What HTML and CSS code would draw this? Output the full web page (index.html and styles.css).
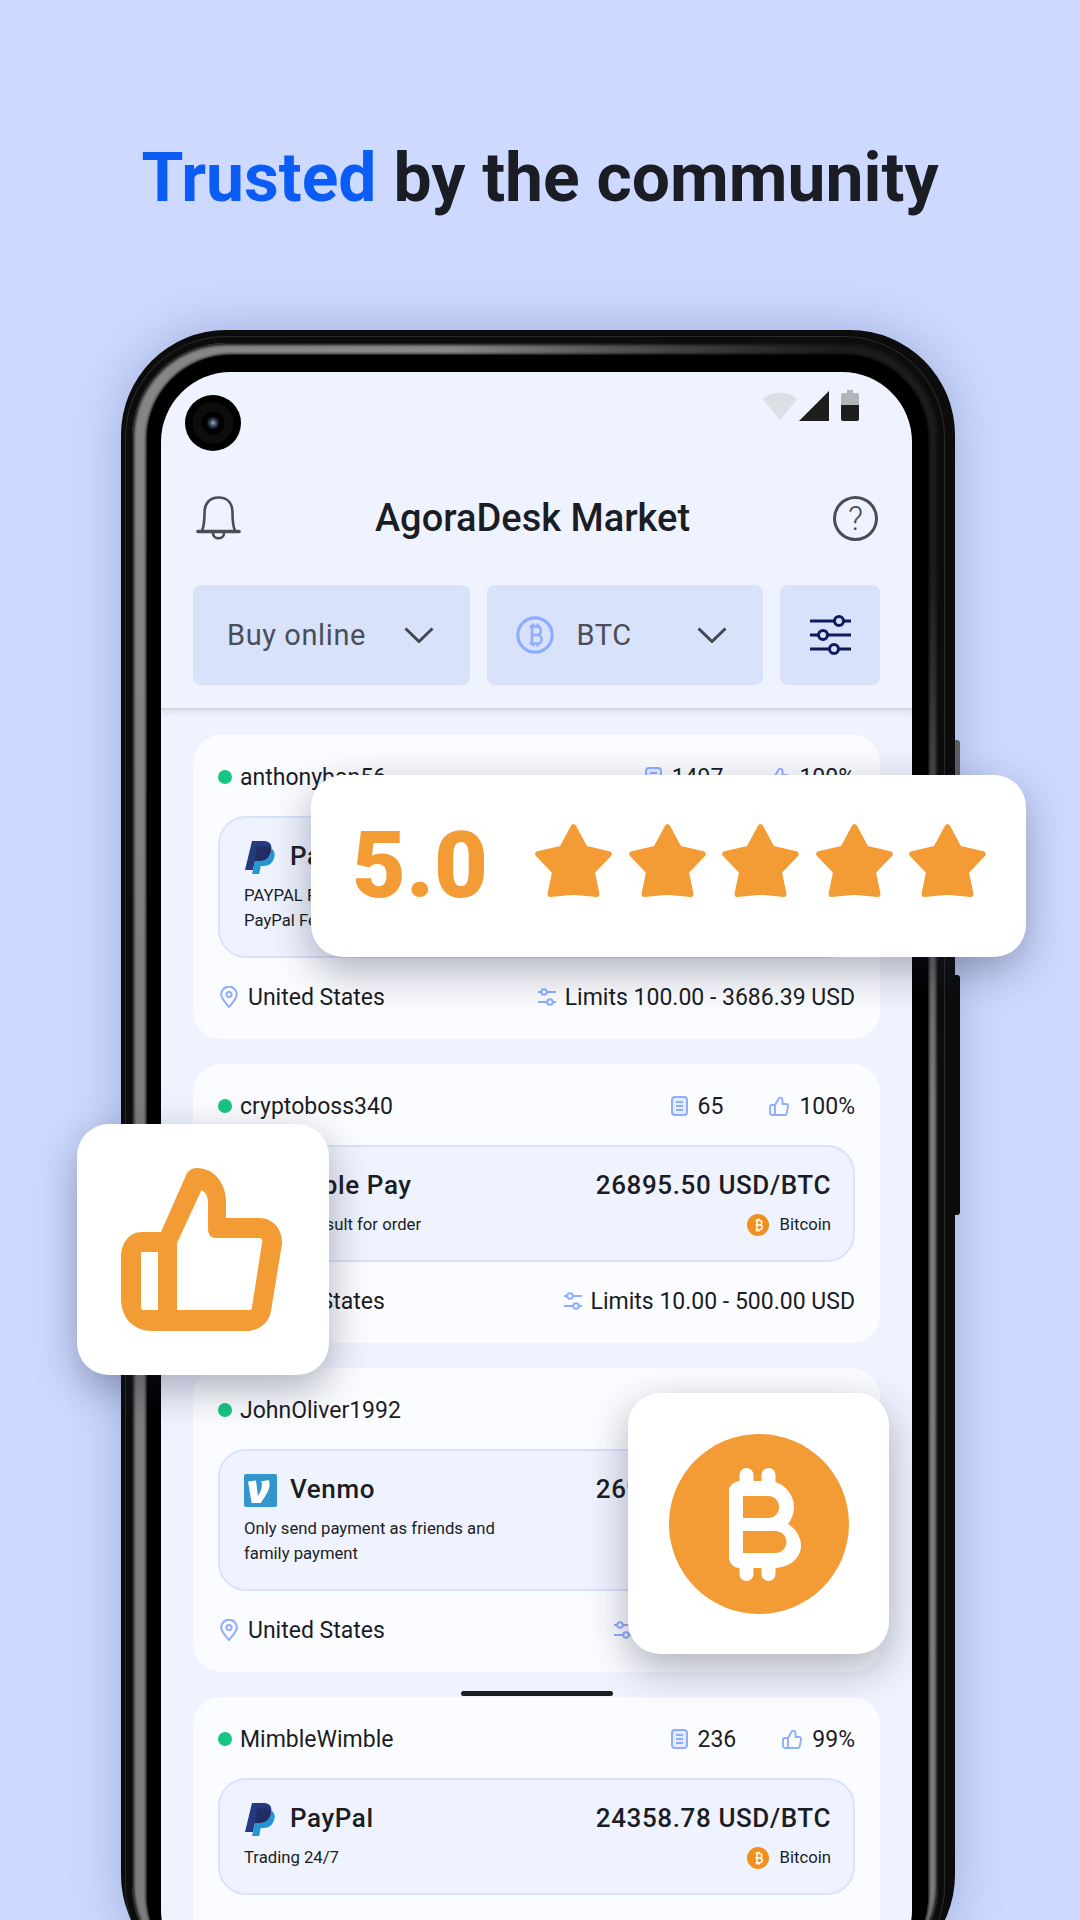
FILE: index.html
```html
<!DOCTYPE html>
<html lang="en">
<head>
    <meta charset="UTF-8">
    <title>AgoraDesk Market</title>
    <link rel="stylesheet" href="styles.css">
</head>
<body>
    <svg class="sprite" width="0" height="0">
        <symbol id="i-doc" viewBox="0 0 17 20">
            <rect x="1" y="1" width="15" height="18" rx="3" fill="#e6ecff" stroke="#8fadff" stroke-width="2"/>
            <path d="M5 6h7M5 10h7M5 14h7" stroke="#8fadff" stroke-width="1.8"/>
        </symbol>
        <symbol id="i-thumb" viewBox="0 0 20 20">
            <path d="M6 9 10 2c2-1 3.500 0 3.500 2.500V8H17c1.500 0 2.200 1 2 2.200l-1.200 7C17.600 18.400 17 19 16 19H3c-1.200 0-2-.8-2-2v-6c0-1.200.8-2 2-2h3v10" fill="none" stroke="#8fadff" stroke-width="1.900" stroke-linejoin="round"/>
        </symbol>
        <symbol id="i-pin" viewBox="0 0 18 22">
            <path d="M9 21C5 16 1.200 12.500 1.200 8.500a7.800 7.800 0 0 1 15.600 0C16.800 12.500 13 16 9 21Z" fill="none" stroke="#8fadff" stroke-width="2"/>
            <circle cx="9" cy="8.500" r="2.600" fill="none" stroke="#8fadff" stroke-width="2"/>
        </symbol>
        <symbol id="i-limits" viewBox="0 0 18 18">
            <path d="M0 4h3M9 4h9M0 14h9M15 14h3" stroke="#8fadff" stroke-width="2"/>
            <circle cx="6" cy="4" r="2.800" fill="none" stroke="#8fadff" stroke-width="2"/>
            <circle cx="12" cy="14" r="2.800" fill="none" stroke="#8fadff" stroke-width="2"/>
        </symbol>
        <symbol id="i-chevron" viewBox="0 0 30 16">
            <path d="M1.500 1.500 15 14.500 28.500 1.500" fill="none" stroke="#43474f" stroke-width="3"/>
        </symbol>
        <symbol id="i-coin" viewBox="0 0 22 22">
            <circle cx="11" cy="11" r="11" fill="#f0901e"/>
            <path d="M8.500 6.500h4c3 0 3 4.200.3 4.400 3.300.2 3.200 4.800-.3 4.800h-4M10 6.500v9.200M10.300 4.700v1.800M12.300 4.700v1.800M10.300 15.700v1.800M12.300 15.700v1.800M8.500 11h4.300" fill="none" stroke="#fff" stroke-width="1.500"/>
        </symbol>
        <symbol id="i-paypal" viewBox="0 0 31 33">
            <path d="M8 0h11c7 0 9.500 4 8 10-1.500 7-6 10-12 10h-4l-2 9H1Z" fill="#253b80"/>
            <path d="M26.500 7c4 2 5 5.500 3.600 10-1.500 5-5.300 8-10.600 8h-2.800l-1.500 8H8l3-13h4c6 0 10.500-3 12-10Z" fill="#2596d1"/>
            <path d="M11 20h4c6 0 10.500-3 12-10l-.5-3c-2-1-4-1.500-7-1.500H13Z" fill="#222d65"/>
        </symbol>
        <symbol id="i-venmo" viewBox="0 0 33 33">
            <rect width="33" height="33" rx="2" fill="#3396cd"/>
            <path d="M24.500 6c.8 1.400 1.100 2.800 1.100 4.600 0 5.700-4.900 13.100-8.900 18.400H7.600L4 7.400l8-.8 1.900 15.400c1.800-2.900 4-7.500 4-10.600 0-1.700-.3-2.900-.8-3.800Z" fill="#fff"/>
        </symbol>
        <symbol id="i-star" viewBox="0 0 100 96">
            <polygon points="50,4 65,32 96,39 74,62 80,91 50,88 20,91 26,62 4,39 35,32" fill="#f39c35" stroke="#f39c35" stroke-width="7.500" stroke-linejoin="round"/>
        </symbol>
    </svg>

    <div class="stage">
        <h1 class="headline"><span class="headline-blue">Trusted</span> by the community</h1>

        <div class="phone">
            <div class="phone-band">
                <div class="phone-bezel">
                    <div class="screen">
                        <div class="topbar">
                            <div class="status">
                                <div class="camera"></div>
                                <div class="status-icons">
                                    <svg width="34" height="30" viewBox="0 0 34 30"><path d="M0 9.500a24 24 0 0 1 34 0L17 30Z" fill="#dcdfe6"/></svg>
                                    <svg class="signal" width="30" height="30" viewBox="0 0 30 30"><path d="M0 30 30 0v30Z" fill="#1e1e1e"/></svg>
                                    <svg class="battery" width="18" height="31" viewBox="0 0 18 31"><path d="M6 0h6v3h4a2 2 0 0 1 2 2v10H0V5a2 2 0 0 1 2-2h4Z" fill="#b1b4b9"/><path d="M0 15h18v14a2 2 0 0 1-2 2H2a2 2 0 0 1-2-2Z" fill="#1e1e1e"/></svg>
                                </div>
                            </div>

                            <div class="appbar">
                                <svg class="bell" width="45" height="44" viewBox="0 0 45 44">
                                    <path d="M6 35C8 30 8.500 26 8.500 17C8.500 7 14 1.500 22.500 1.500S36.500 7 36.500 17C36.500 26 37 30 39 35" fill="none" stroke="#494d56" stroke-width="2.600"/>
                                    <path d="M2 35.500h41" stroke="#494d56" stroke-width="3.600" stroke-linecap="round"/>
                                    <path d="M17 37c0 7 11 7 11 0" fill="none" stroke="#494d56" stroke-width="2.600"/>
                                </svg>
                                <div class="appbar-title">AgoraDesk Market</div>
                                <div class="help">?</div>
                            </div>

                            <div class="filters">
                                <div class="filter">
                                    <span class="filter-label">Buy online</span>
                                    <svg class="chevron"><use href="#i-chevron"/></svg>
                                </div>
                                <div class="filter filter-coin">
                                    <svg width="38" height="38" viewBox="0 0 38 38">
                                        <circle cx="19" cy="19" r="17.200" fill="none" stroke="#8fadff" stroke-width="3.200"/>
                                        <path d="M13.500 10.500h7.500c5 0 5 8 .5 8.500 5.500.5 5.500 8.500-.5 8.500h-7.500M16 10.500v17M16 19h6M17 7.500v3M21.500 7.500v3M17 27.500v3M21.500 27.500v3" fill="none" stroke="#8fadff" stroke-width="2.600"/>
                                    </svg>
                                    <span class="filter-label">BTC</span>
                                    <svg class="chevron"><use href="#i-chevron"/></svg>
                                </div>
                                <div class="filter filter-tune">
                                    <svg width="41" height="40" viewBox="0 0 41 40">
                                        <path d="M0 6h24M34 6h7M0 20h8M18 20h23M0 34h19M29 34h12" stroke="#0e1a5c" stroke-width="3"/>
                                        <circle cx="29" cy="6" r="4.500" fill="none" stroke="#0e1a5c" stroke-width="3"/>
                                        <circle cx="13" cy="20" r="4.500" fill="none" stroke="#0e1a5c" stroke-width="3"/>
                                        <circle cx="24" cy="34" r="4.500" fill="none" stroke="#0e1a5c" stroke-width="3"/>
                                    </svg>
                                </div>
                            </div>
                        </div>

                        <div class="offers">
                            <div class="card">
                                <div class="card-row">
                                    <div class="user"><span class="dot"></span>anthonyban56</div>
                                    <div class="stats">
                                        <div class="stat"><svg class="icon-doc"><use href="#i-doc"/></svg>1497</div>
                                        <div class="stat"><svg class="icon-thumb"><use href="#i-thumb"/></svg>100%</div>
                                    </div>
                                </div>
                                <div class="pay">
                                    <div class="pay-top">
                                        <div class="pay-name"><svg class="icon-logo"><use href="#i-paypal"/></svg>PayPal</div>
                                        <div class="pay-price">26880.10 USD/BTC</div>
                                    </div>
                                    <div class="pay-sub">
                                        <div class="pay-desc">PAYPAL FRIENDS AND<br>PayPal Fees apply</div>
                                        <div class="coin"><svg class="icon-coin"><use href="#i-coin"/></svg>Bitcoin</div>
                                    </div>
                                </div>
                                <div class="card-row">
                                    <div class="place"><svg class="icon-pin"><use href="#i-pin"/></svg>United States</div>
                                    <div class="limits"><svg class="icon-limits"><use href="#i-limits"/></svg>Limits 100.00 - 3686.39 USD</div>
                                </div>
                            </div>

                            <div class="card">
                                <div class="card-row">
                                    <div class="user"><span class="dot"></span>cryptoboss340</div>
                                    <div class="stats">
                                        <div class="stat"><svg class="icon-doc"><use href="#i-doc"/></svg>65</div>
                                        <div class="stat"><svg class="icon-thumb"><use href="#i-thumb"/></svg>100%</div>
                                    </div>
                                </div>
                                <div class="pay">
                                    <div class="pay-top">
                                        <div class="pay-name"><svg class="icon-logo"></svg>Apple Pay</div>
                                        <div class="pay-price">26895.50 USD/BTC</div>
                                    </div>
                                    <div class="pay-sub">
                                        <div class="pay-desc">Please consult for order</div>
                                        <div class="coin"><svg class="icon-coin"><use href="#i-coin"/></svg>Bitcoin</div>
                                    </div>
                                </div>
                                <div class="card-row">
                                    <div class="place"><svg class="icon-pin"><use href="#i-pin"/></svg>United States</div>
                                    <div class="limits"><svg class="icon-limits"><use href="#i-limits"/></svg>Limits 10.00 - 500.00 USD</div>
                                </div>
                            </div>

                            <div class="card">
                                <div class="card-row">
                                    <div class="user"><span class="dot"></span>JohnOliver1992</div>
                                    <div class="stats">
                                        <div class="stat"><svg class="icon-doc"><use href="#i-doc"/></svg>112</div>
                                        <div class="stat"><svg class="icon-thumb"><use href="#i-thumb"/></svg>100%</div>
                                    </div>
                                </div>
                                <div class="pay">
                                    <div class="pay-top">
                                        <div class="pay-name"><svg class="icon-logo icon-logo-square"><use href="#i-venmo"/></svg>Venmo</div>
                                        <div class="pay-price">26900.00 USD/BTC</div>
                                    </div>
                                    <div class="pay-sub">
                                        <div class="pay-desc">Only send payment as friends and<br>family payment</div>
                                        <div class="coin"><svg class="icon-coin"><use href="#i-coin"/></svg>Bitcoin</div>
                                    </div>
                                </div>
                                <div class="card-row">
                                    <div class="place"><svg class="icon-pin"><use href="#i-pin"/></svg>United States</div>
                                    <div class="limits"><svg class="icon-limits"><use href="#i-limits"/></svg>Limits 10 - 3000 USD</div>
                                </div>
                            </div>

                            <div class="card">
                                <div class="card-row">
                                    <div class="user"><span class="dot"></span>MimbleWimble</div>
                                    <div class="stats">
                                        <div class="stat"><svg class="icon-doc"><use href="#i-doc"/></svg>236</div>
                                        <div class="stat"><svg class="icon-thumb"><use href="#i-thumb"/></svg>99%</div>
                                    </div>
                                </div>
                                <div class="pay">
                                    <div class="pay-top">
                                        <div class="pay-name"><svg class="icon-logo"><use href="#i-paypal"/></svg>PayPal</div>
                                        <div class="pay-price">24358.78 USD/BTC</div>
                                    </div>
                                    <div class="pay-sub">
                                        <div class="pay-desc">Trading 24/7</div>
                                        <div class="coin"><svg class="icon-coin"><use href="#i-coin"/></svg>Bitcoin</div>
                                    </div>
                                </div>
                            </div>
                        </div>

                        <div class="home-bar"></div>
                    </div>
                </div>
            </div>
            <div class="side-key side-key-top"></div>
            <div class="side-key side-key-power"></div>
        </div>

        <!-- floating badges over the phone -->
        <div class="badge badge-rating">
            <span class="rating-value">5.0</span>
            <div class="rating-stars">
                <svg class="star"><use href="#i-star"/></svg>
                <svg class="star"><use href="#i-star"/></svg>
                <svg class="star"><use href="#i-star"/></svg>
                <svg class="star"><use href="#i-star"/></svg>
                <svg class="star"><use href="#i-star"/></svg>
            </div>
        </div>

        <div class="badge badge-thumb">
            <svg width="162" height="163" viewBox="0 0 162 163">
                <path fill="#f39c35" fill-rule="evenodd" d="M76 0C92 0 105 14 105 34V50H139C152 50 162 62 161 76L150 143C148 155 138 163 125 163H32C12 163 0 150 0 130V90C0 75 8 64 21 64H40L66 5C68 2 72 0 76 0ZM56 142V75L80.500 22C84 24 87 28 87 34V60C87 66 89 70 95 70H138C141 70 142 72 141 75L131 139C131 141 130 142 128 142ZM20 84H37V142H22C20 142 20 140 20 138Z"/>
            </svg>
        </div>

        <div class="badge badge-btc">
            <svg width="180" height="180" viewBox="0 0 180 180">
                <circle cx="90" cy="90" r="90" fill="#f39c35"/>
                <path fill="#fff" fill-rule="evenodd" d="M70.500 47V41a7 7 0 0 1 14 0V47H92.500V41a7 7 0 0 1 14 0V48C118 52 125 62 125 73C125 80 122 86 119 90C127 95 132 103 132 112C132 123 122 133 106.500 134V140a7 7 0 0 1-14 0V134H84.500V140a7 7 0 0 1-14 0V134C64 134 60 128 60 124V57C60 52 64 48 70.500 47ZM74 62V84H99C106 84 110 79 110 73C110 67 106 62 99 62ZM74 97V119H106C113 119 117.500 114 117.500 108C117.500 102 113 97 106 97Z"/>
            </svg>
        </div>
    </div>
</body>
</html>
```

FILE: styles.css
```css
* {
    box-sizing: border-box;
}
html, body {
    margin: 0;
    height: 1920px;
    overflow: hidden;
}
body {
    font-family: Roboto, "Liberation Sans", sans-serif;
    background: #cdd9ff;
    color: #1b1d24;
}
svg {
    display: block;
    flex: none;
}
.sprite {
    position: absolute;
}
.stage {
    position: relative;
    width: 1080px;
    height: 1920px;
    overflow: hidden;
}

/* headline */
.headline {
    margin: 0;
    padding-top: 138px;
    height: 217px;
    line-height: 80px;
    font-size: 67.800px;
    font-weight: 700;
    text-align: center;
}
.headline-blue {
    color: #0a5cf5;
}

/* phone frame */
.phone {
    position: relative;
    width: 834px;
    height: 1650px;
    margin: 113px 0 0 121px;
    padding: 13px 17px 0 11px;
    background: #0c0c0c;
    border-radius: 105px;
    box-shadow: 0 0 50px rgba(40, 55, 110, 0.26);
}
.phone-band {
    height: 100%;
    padding: 12px 10px 0 15px;
    border-radius: 94px;
    background: conic-gradient(from -6deg, #8a8a8a 0deg, #4a4a4a 14deg, #1c1c1c 26deg, #1c1c1c 40deg, #555 55deg, #7d7d7d 88deg, #7d7d7d 300deg, #8a8a8a 360deg);
    box-shadow: 0 0 0 6px #0c0c0c, 0 0 0 7px #2b2b2b, inset 0 0 3px 2px #111;
}
.phone-bezel {
    height: 100%;
    padding: 17px 16px 0 14px;
    background: #000;
    border-radius: 84px;
    box-shadow: 0 0 3px 1px #000;
}
.screen {
    position: relative;
    height: 100%;
    background: #eff3ff;
    border-radius: 70px;
    overflow: hidden;
}
.side-key {
    position: absolute;
    left: 834px;
    width: 5px;
    border-radius: 0 3px 3px 0;
}
.side-key-top {
    top: 410px;
    height: 140px;
    background: #5f6064;
}
.side-key-power {
    top: 645px;
    height: 240px;
    background: #0b0b0b;
}

/* top of the screen */
.topbar {
    padding: 0 32px 23px;
    border-bottom: 2px solid #d3d8e3;
    box-shadow: 0 3px 6px rgba(60, 70, 100, 0.1);
}
.status {
    display: flex;
    justify-content: space-between;
    align-items: flex-start;
    height: 96px;
    margin: 0 21px 0 -8px;
    padding-top: 18px;
}
.camera {
    width: 56px;
    height: 56px;
    margin-top: 5px;
    border-radius: 50%;
    background: radial-gradient(circle at 50% 50%, #8fb3d0 0, #3c4f62 3px, #0a0d10 6px, #000 7px, #000 11px, #0d0d0d 12px, #0d0d0d 20px, #000 21px);
}
.status-icons {
    display: flex;
    align-items: flex-start;
}
.signal {
    margin: 1px 12px 0 2px;
}
.appbar {
    display: flex;
    justify-content: space-between;
    align-items: center;
    height: 100px;
    margin: 0 2px 17px 3px;
}
.appbar-title {
    font-size: 38px;
    font-weight: 500;
    margin-right: 9px;
}
.help {
    width: 45px;
    height: 45px;
    border: 3px solid #494d56;
    border-radius: 50%;
    line-height: 39px;
    text-align: center;
    font-size: 33px;
    font-weight: 300;
    color: #494d56;
}
.filters {
    display: grid;
    grid-template-columns: 1fr 1fr 100px;
    gap: 17px;
}
.filter {
    display: flex;
    align-items: center;
    height: 100px;
    padding: 0 36px 0 34px;
    background: #d8e3fb;
    border-radius: 8px;
    color: #4a4e59;
    font-size: 29px;
}
.filter-label {
    flex: 1;
    letter-spacing: 0.6px;
}
.filter-coin {
    padding-left: 29px;
}
.filter-coin .filter-label {
    margin-left: 23px;
}
.filter-tune {
    padding: 0 0 0 30px;
}
.chevron {
    width: 30px;
    height: 16px;
}

/* offer list */
.offers {
    display: flex;
    flex-direction: column;
    gap: 25px;
    padding: 25px 32px 0;
}
.card {
    padding: 27px 25px;
    background: #fbfcff;
    border-radius: 28px;
}
.card-row {
    display: flex;
    justify-content: space-between;
    align-items: center;
    height: 30px;
    font-size: 23px;
}
.user {
    display: flex;
    align-items: center;
    gap: 8px;
}
.dot {
    width: 14px;
    height: 14px;
    border-radius: 50%;
    background: #17c583;
}
.stats {
    display: flex;
    gap: 46px;
}
.stat {
    display: flex;
    align-items: center;
    gap: 10px;
}
.icon-doc {
    width: 17px;
    height: 20px;
}
.icon-thumb {
    width: 20px;
    height: 20px;
}
.pay {
    margin: 24px 0;
    padding: 23px 22px 23px 24px;
    background: #eff3ff;
    border: 2px solid #d8e2ff;
    border-radius: 28px;
}
.pay-top {
    display: flex;
    justify-content: space-between;
    align-items: center;
    height: 33px;
    font-size: 26px;
    font-weight: 500;
    letter-spacing: 0.6px;
}
.pay-name {
    display: flex;
    align-items: center;
    gap: 15px;
    margin-top: -3px;
}
.pay-price {
    margin-top: -3px;
}
.icon-logo {
    width: 31px;
    height: 33px;
    margin-top: 3px;
}
.icon-logo-square {
    width: 33px;
    margin-right: -2px;
}
.pay-sub {
    display: flex;
    justify-content: space-between;
    margin-top: 9px;
    font-size: 16.700px;
    line-height: 25px;
}
.coin {
    display: flex;
    align-items: center;
    gap: 11px;
    height: 25px;
}
.icon-coin {
    width: 22px;
    height: 22px;
}
.place, .limits {
    display: flex;
    align-items: center;
    gap: 9px;
}
.place {
    gap: 10px;
    padding-left: 2px;
}
.icon-pin {
    width: 18px;
    height: 22px;
}
.icon-limits {
    width: 18px;
    height: 18px;
}
.home-bar {
    position: absolute;
    top: 1319px;
    left: 300px;
    width: 152px;
    height: 5px;
    border-radius: 3px;
    background: #1e1f22;
}

/* floating badges */
.badge {
    position: absolute;
    display: flex;
    align-items: center;
    justify-content: center;
    background: #fff;
    border-radius: 32px;
    box-shadow: 0 14px 40px rgba(30, 35, 60, 0.35);
}
.badge-rating {
    left: 311px;
    top: 775px;
    width: 715px;
    height: 182px;
    justify-content: flex-start;
    padding-left: 41px;
}
.rating-value {
    width: 183px;
    font-size: 93px;
    font-weight: 900;
    color: #f39c35;
    margin-top: -2px;
}
.rating-stars {
    display: flex;
    gap: 16.500px;
    margin-top: -10px;
}
.star {
    width: 77px;
    height: 74px;
}
.badge-thumb {
    left: 77px;
    top: 1124px;
    width: 252px;
    height: 251px;
    padding-right: 2px;
}
.badge-btc {
    left: 628px;
    top: 1393px;
    width: 261px;
    height: 261px;
}
```
